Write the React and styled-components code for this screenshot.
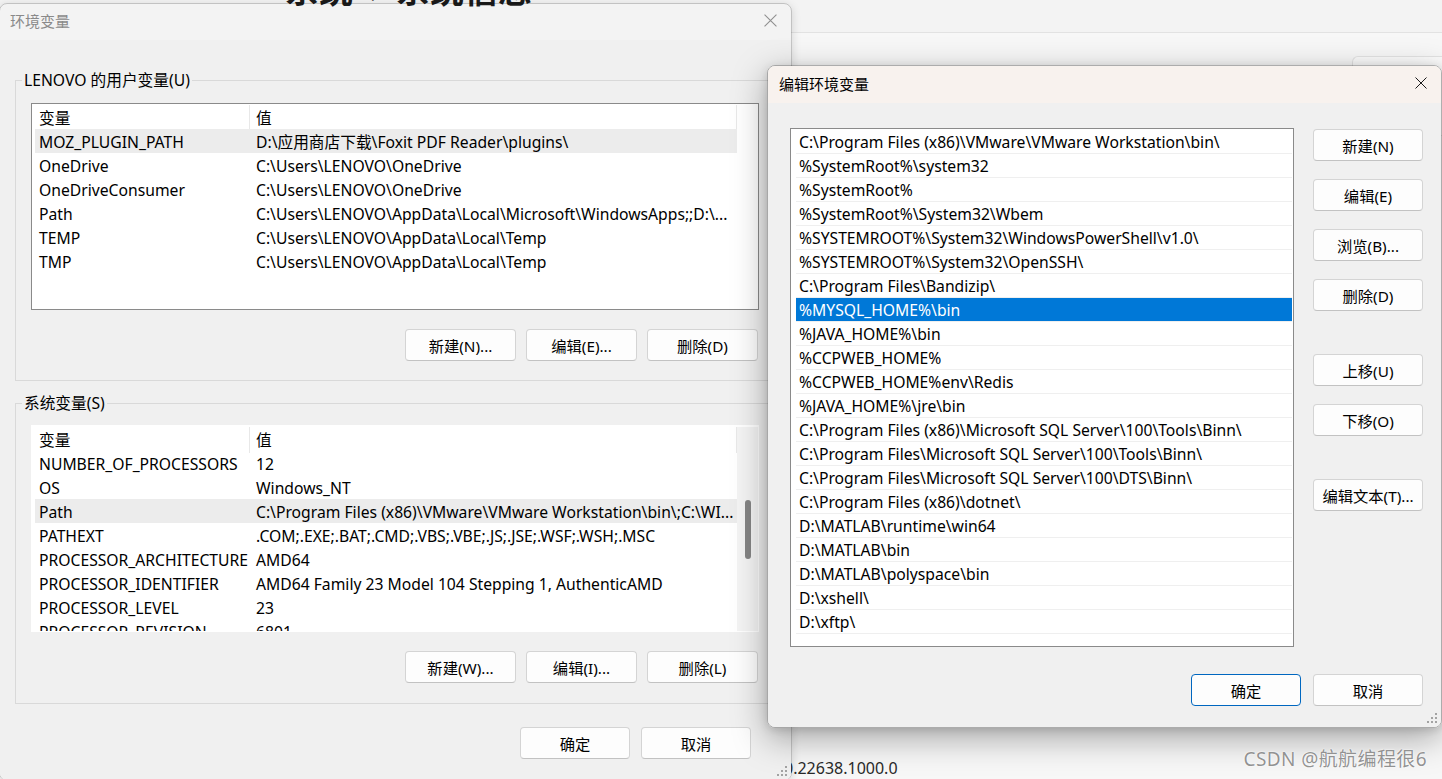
import React from 'react';
import styled, { createGlobalStyle } from 'styled-components';

const UI_FONT = `"Noto Sans", "Noto Sans CJK SC", sans-serif`;

const GlobalStyle = createGlobalStyle`
  *, *::before, *::after { box-sizing: border-box; }
  html, body { margin: 0; padding: 0; background: #f3f3f3; }
  body { font-family: ${UI_FONT}; color: #000; }
`;

// Desktop + the Settings window that sits behind both dialogs
const Desktop = styled.div`
  position: relative;
  width: 1442px;
  height: 779px;
  overflow: hidden;
  font-family: ${UI_FONT};
  font-size: 15.7px;
`;

const Backdrop = styled.div`
  height: 779px;
  display: flex;
  flex-direction: column;
`;

const BackdropTop = styled.div`
  flex: none;
  height: 33px;
  background: #f3f3f3;
  border-bottom: 1px solid #e2e2e2;
`;

const PageTitle = styled.div`
  margin-top: -31px;
  padding-left: 285px;
  display: flex;
  align-items: center;
  gap: 16px;
  font-family: "Noto Sans CJK SC", sans-serif;
  font-size: 34px;
  font-weight: 600;
  line-height: 40px;
  color: #1b1b1b;
`;

const BackdropContent = styled.div`
  flex: 1;
  background: #f7f7f7;
  display: flex;
  flex-direction: column;
  justify-content: space-between;
`;

const InfoCard = styled.div`
  align-self: flex-end;
  width: 90px;
  height: 80px;
  margin-top: 23px;
  background: #fbfbfb;
  border: 1px solid #e3e3e3;
  border-right: none;
  border-radius: 6px 0 0 6px;
`;

const VersionText = styled.div`
  padding-left: 784px;
  padding-bottom: 1px;
  font-size: 16px;
  line-height: 20px;
  color: #2a2a2a;
`;

const Watermark = styled.div`
  position: absolute;
  right: 15px;
  bottom: 7px;
  font-size: 19px;
  color: rgba(110, 110, 110, 0.75);
  text-shadow: 0 0 1px #fff, 0 0 2px #fff;
  letter-spacing: 0.4px;
`;

// Dialog windows
const Dialog = styled.div`
  position: absolute;
  top: ${p => p.$top}px;
  left: ${p => p.$left}px;
  width: ${p => p.$width}px;
  height: ${p => p.$height}px;
  display: flex;
  flex-direction: column;
  border: 1px solid ${p => (p.$active ? 'rgba(0,0,0,0.3)' : 'rgba(0,0,0,0.2)')};
  border-radius: 8px;
  overflow: hidden;
  box-shadow: ${p =>
    p.$active
      ? '0 10px 34px rgba(0,0,0,0.34), 0 2px 8px rgba(0,0,0,0.12)'
      : '0 2px 10px rgba(0,0,0,0.14)'};
`;

const TitleBar = styled.div`
  flex: none;
  height: ${p => p.$height}px;
  display: flex;
  align-items: center;
  justify-content: space-between;
  padding: 0 14px 3px ${p => p.$padLeft}px;
  background: ${p => p.$bg};
  font-size: 15px;
  color: ${p => (p.$active ? '#000' : '#8a8a8a')};
`;

const DialogBody = styled.div`
  flex: 1;
  display: flex;
  flex-direction: column;
  background: #f0f0f0;
  padding: ${p => p.$pad};
`;

const Grip = styled.svg`
  position: absolute;
  right: 3px;
  bottom: 3px;
`;

// Group boxes
const Group = styled.fieldset`
  margin: ${p => p.$mt || 0}px 0 0 0;
  padding: ${p => p.$pt}px 16px ${p => p.$pb}px 15px;
  border: 1px solid #d9d9d9;
  min-width: 0;
`;

const Legend = styled.legend`
  margin-left: -9px;
  padding: 0 2px;
  font-size: 15.7px;
  line-height: 20px;
  color: #000;
`;

// Lists
const ListBox = styled.div`
  height: 207px;
  display: flex;
  background: #fff;
  border: 1px solid ${p => (p.$bordered ? '#8a8a8a' : '#fff')};
  padding-top: 1px;
  overflow: hidden;
`;

const Table = styled.div`
  flex: none;
  width: 702px;
  margin-left: 3px;
  display: grid;
  grid-template-columns: 215px 487px;
  grid-auto-rows: 24px;
  align-content: start;
`;

const HeadCell = styled.div`
  height: 26px;
  line-height: 25px;
  padding: 1px 0 0 ${p => (p.$first ? 4 : 6)}px;
  border-right: 1px solid #e8e8e8;
  background: #fff;
`;

const Cell = styled.div`
  height: 24px;
  line-height: 22px;
  padding: 2px 0 0 ${p => (p.$first ? 4 : 6)}px;
  white-space: nowrap;
  overflow: hidden;
  background: ${p => (p.$hl ? '#ececec' : 'transparent')};
`;

const ScrollTrack = styled.div`
  flex: 1;
  background: #f4f4f4;
  padding: 73px 0 0 8px;
`;

const Thumb = styled.div`
  width: 6px;
  height: 59px;
  border-radius: 3px;
  background: #858585;
`;

const PathList = styled.div`
  width: 504px;
  height: 519px;
  background: #fff;
  border: 1px solid #8a8a8a;
  padding: 1px 1px 1px 5px;
  overflow: hidden;
`;

const PathRow = styled.div`
  height: 24px;
  line-height: 21px;
  padding: 2px 0 0 3px;
  border-bottom: 1px solid #efefef;
  white-space: nowrap;
  background: ${p => (p.$selected ? '#0078d7' : 'transparent')};
  color: ${p => (p.$selected ? '#fff' : '#000')};
`;

// Buttons
const ButtonRow = styled.div`
  display: flex;
  justify-content: flex-end;
  gap: ${p => p.$gap || 10}px;
  margin-top: ${p => p.$mt || 0}px;
  padding-right: ${p => p.$pr || 0}px;
`;

const Button = styled.button`
  width: ${p => p.$w || 110}px;
  height: 32px;
  padding: 0;
  font-family: ${UI_FONT};
  font-size: 15.3px;
  color: #000;
  background: #fdfdfd;
  border: 1px solid ${p => (p.$default ? '#0067c0' : '#d4d4d4')};
  border-bottom-color: ${p => (p.$default ? '#0067c0' : '#c2c2c2')};
  border-radius: 4px;
`;

const EditRow = styled.div`
  display: flex;
  gap: 19px;
`;

const SideColumn = styled.div`
  display: flex;
  flex-direction: column;
  gap: 43px;
  padding-top: 1px;
`;

const SideGroup = styled.div`
  display: flex;
  flex-direction: column;
  gap: 18px;
`;

const CloseIcon = ({ color, size }) => (
  <svg width={size} height={size} viewBox="0 0 12 12">
    <path d="M0.5 0.5 L11.5 11.5 M11.5 0.5 L0.5 11.5" stroke={color} strokeWidth="1" fill="none" />
  </svg>
);

const GripIcon = () => (
  <Grip width="11" height="11" viewBox="0 0 11 11">
    {[[8, 0], [8, 4], [4, 4], [8, 8], [4, 8], [0, 8]].map(([x, y], i) => (
      <rect key={i} x={x} y={y} width="2" height="2" fill="#a3a3a3" />
    ))}
  </Grip>
);

const userVars = [
  ['MOZ_PLUGIN_PATH', 'D:\\应用商店下载\\Foxit PDF Reader\\plugins\\', true],
  ['OneDrive', 'C:\\Users\\LENOVO\\OneDrive'],
  ['OneDriveConsumer', 'C:\\Users\\LENOVO\\OneDrive'],
  ['Path', 'C:\\Users\\LENOVO\\AppData\\Local\\Microsoft\\WindowsApps;;D:\\...'],
  ['TEMP', 'C:\\Users\\LENOVO\\AppData\\Local\\Temp'],
  ['TMP', 'C:\\Users\\LENOVO\\AppData\\Local\\Temp'],
];

const systemVars = [
  ['NUMBER_OF_PROCESSORS', '12'],
  ['OS', 'Windows_NT'],
  ['Path', 'C:\\Program Files (x86)\\VMware\\VMware Workstation\\bin\\;C:\\WI...', true],
  ['PATHEXT', '.COM;.EXE;.BAT;.CMD;.VBS;.VBE;.JS;.JSE;.WSF;.WSH;.MSC'],
  ['PROCESSOR_ARCHITECTURE', 'AMD64'],
  ['PROCESSOR_IDENTIFIER', 'AMD64 Family 23 Model 104 Stepping 1, AuthenticAMD'],
  ['PROCESSOR_LEVEL', '23'],
  ['PROCESSOR_REVISION', '6801'],
];

const pathEntries = [
  'C:\\Program Files (x86)\\VMware\\VMware Workstation\\bin\\',
  '%SystemRoot%\\system32',
  '%SystemRoot%',
  '%SystemRoot%\\System32\\Wbem',
  '%SYSTEMROOT%\\System32\\WindowsPowerShell\\v1.0\\',
  '%SYSTEMROOT%\\System32\\OpenSSH\\',
  'C:\\Program Files\\Bandizip\\',
  '%MYSQL_HOME%\\bin',
  '%JAVA_HOME%\\bin',
  '%CCPWEB_HOME%',
  '%CCPWEB_HOME%env\\Redis',
  '%JAVA_HOME%\\jre\\bin',
  'C:\\Program Files (x86)\\Microsoft SQL Server\\100\\Tools\\Binn\\',
  'C:\\Program Files\\Microsoft SQL Server\\100\\Tools\\Binn\\',
  'C:\\Program Files\\Microsoft SQL Server\\100\\DTS\\Binn\\',
  'C:\\Program Files (x86)\\dotnet\\',
  'D:\\MATLAB\\runtime\\win64',
  'D:\\MATLAB\\bin',
  'D:\\MATLAB\\polyspace\\bin',
  'D:\\xshell\\',
  'D:\\xftp\\',
];

const VarTable = ({ rows }) => (
  <Table>
    <HeadCell $first>变量</HeadCell>
    <HeadCell>值</HeadCell>
    {rows.map(([name, value, hl]) => (
      <React.Fragment key={name}>
        <Cell $first $hl={hl}>{name}</Cell>
        <Cell $hl={hl}>{value}</Cell>
      </React.Fragment>
    ))}
  </Table>
);

export default function App() {
  return (
    <>
      <GlobalStyle />
      <Desktop>
        {/* Settings window in the background */}
        <Backdrop>
          <BackdropTop>
            <PageTitle>
              <span>系统</span>
              <span>›</span>
              <span>系统信息</span>
            </PageTitle>
          </BackdropTop>
          <BackdropContent>
            <InfoCard />
            <VersionText>0.22638.1000.0</VersionText>
          </BackdropContent>
        </Backdrop>

        {/* 环境变量 */}
        <Dialog $top={3} $left={-1} $width={793} $height={778}>
          <TitleBar
            $height={36}
            $padLeft={10}
            $bg="linear-gradient(to bottom, transparent 0, transparent 9px, #f3f3f3 9px)"
          >
            <span>环境变量</span>
            <CloseIcon color="#8f8f8f" size={13} />
          </TitleBar>
          <DialogBody $pad="30px 15px 0 15px">
            <Group $pt={13} $pb={19}>
              <Legend>LENOVO 的用户变量(U)</Legend>
              <ListBox $bordered>
                <VarTable rows={userVars} />
              </ListBox>
              <ButtonRow $mt={19} $pr={1}>
                <Button $w={111}>新建(N)...</Button>
                <Button $w={111}>编辑(E)...</Button>
                <Button $w={111}>删除(D)</Button>
              </ButtonRow>
            </Group>
            <Group $mt={12} $pt={12} $pb={20}>
              <Legend>系统变量(S)</Legend>
              <ListBox>
                <VarTable rows={systemVars} />
                <ScrollTrack>
                  <Thumb />
                </ScrollTrack>
              </ListBox>
              <ButtonRow $mt={19} $pr={1}>
                <Button $w={111}>新建(W)...</Button>
                <Button $w={111}>编辑(I)...</Button>
                <Button $w={111}>删除(L)</Button>
              </ButtonRow>
            </Group>
            <ButtonRow $mt={23} $gap={11} $pr={25}>
              <Button>确定</Button>
              <Button>取消</Button>
            </ButtonRow>
          </DialogBody>
          <GripIcon />
        </Dialog>

        {/* 编辑环境变量 */}
        <Dialog $top={65} $left={767} $width={675} $height={663} $active>
          <TitleBar $height={37} $padLeft={11} $bg="#f8f2ee" $active>
            <span>编辑环境变量</span>
            <CloseIcon color="#1a1a1a" size={12} />
          </TitleBar>
          <DialogBody $pad="25px 18px 0 22px">
            <EditRow>
              <PathList>
                {pathEntries.map((p, i) => (
                  <PathRow key={i} $selected={i === 7}>{p}</PathRow>
                ))}
              </PathList>
              <SideColumn>
                <SideGroup>
                  <Button>新建(N)</Button>
                  <Button>编辑(E)</Button>
                  <Button>浏览(B)...</Button>
                  <Button>删除(D)</Button>
                </SideGroup>
                <SideGroup>
                  <Button>上移(U)</Button>
                  <Button>下移(O)</Button>
                </SideGroup>
                <SideGroup>
                  <Button>编辑文本(T)...</Button>
                </SideGroup>
              </SideColumn>
            </EditRow>
            <ButtonRow $mt={27} $gap={12}>
              <Button $default>确定</Button>
              <Button>取消</Button>
            </ButtonRow>
          </DialogBody>
          <GripIcon />
        </Dialog>

        <Watermark>CSDN @航航编程很6</Watermark>
      </Desktop>
    </>
  );
}
